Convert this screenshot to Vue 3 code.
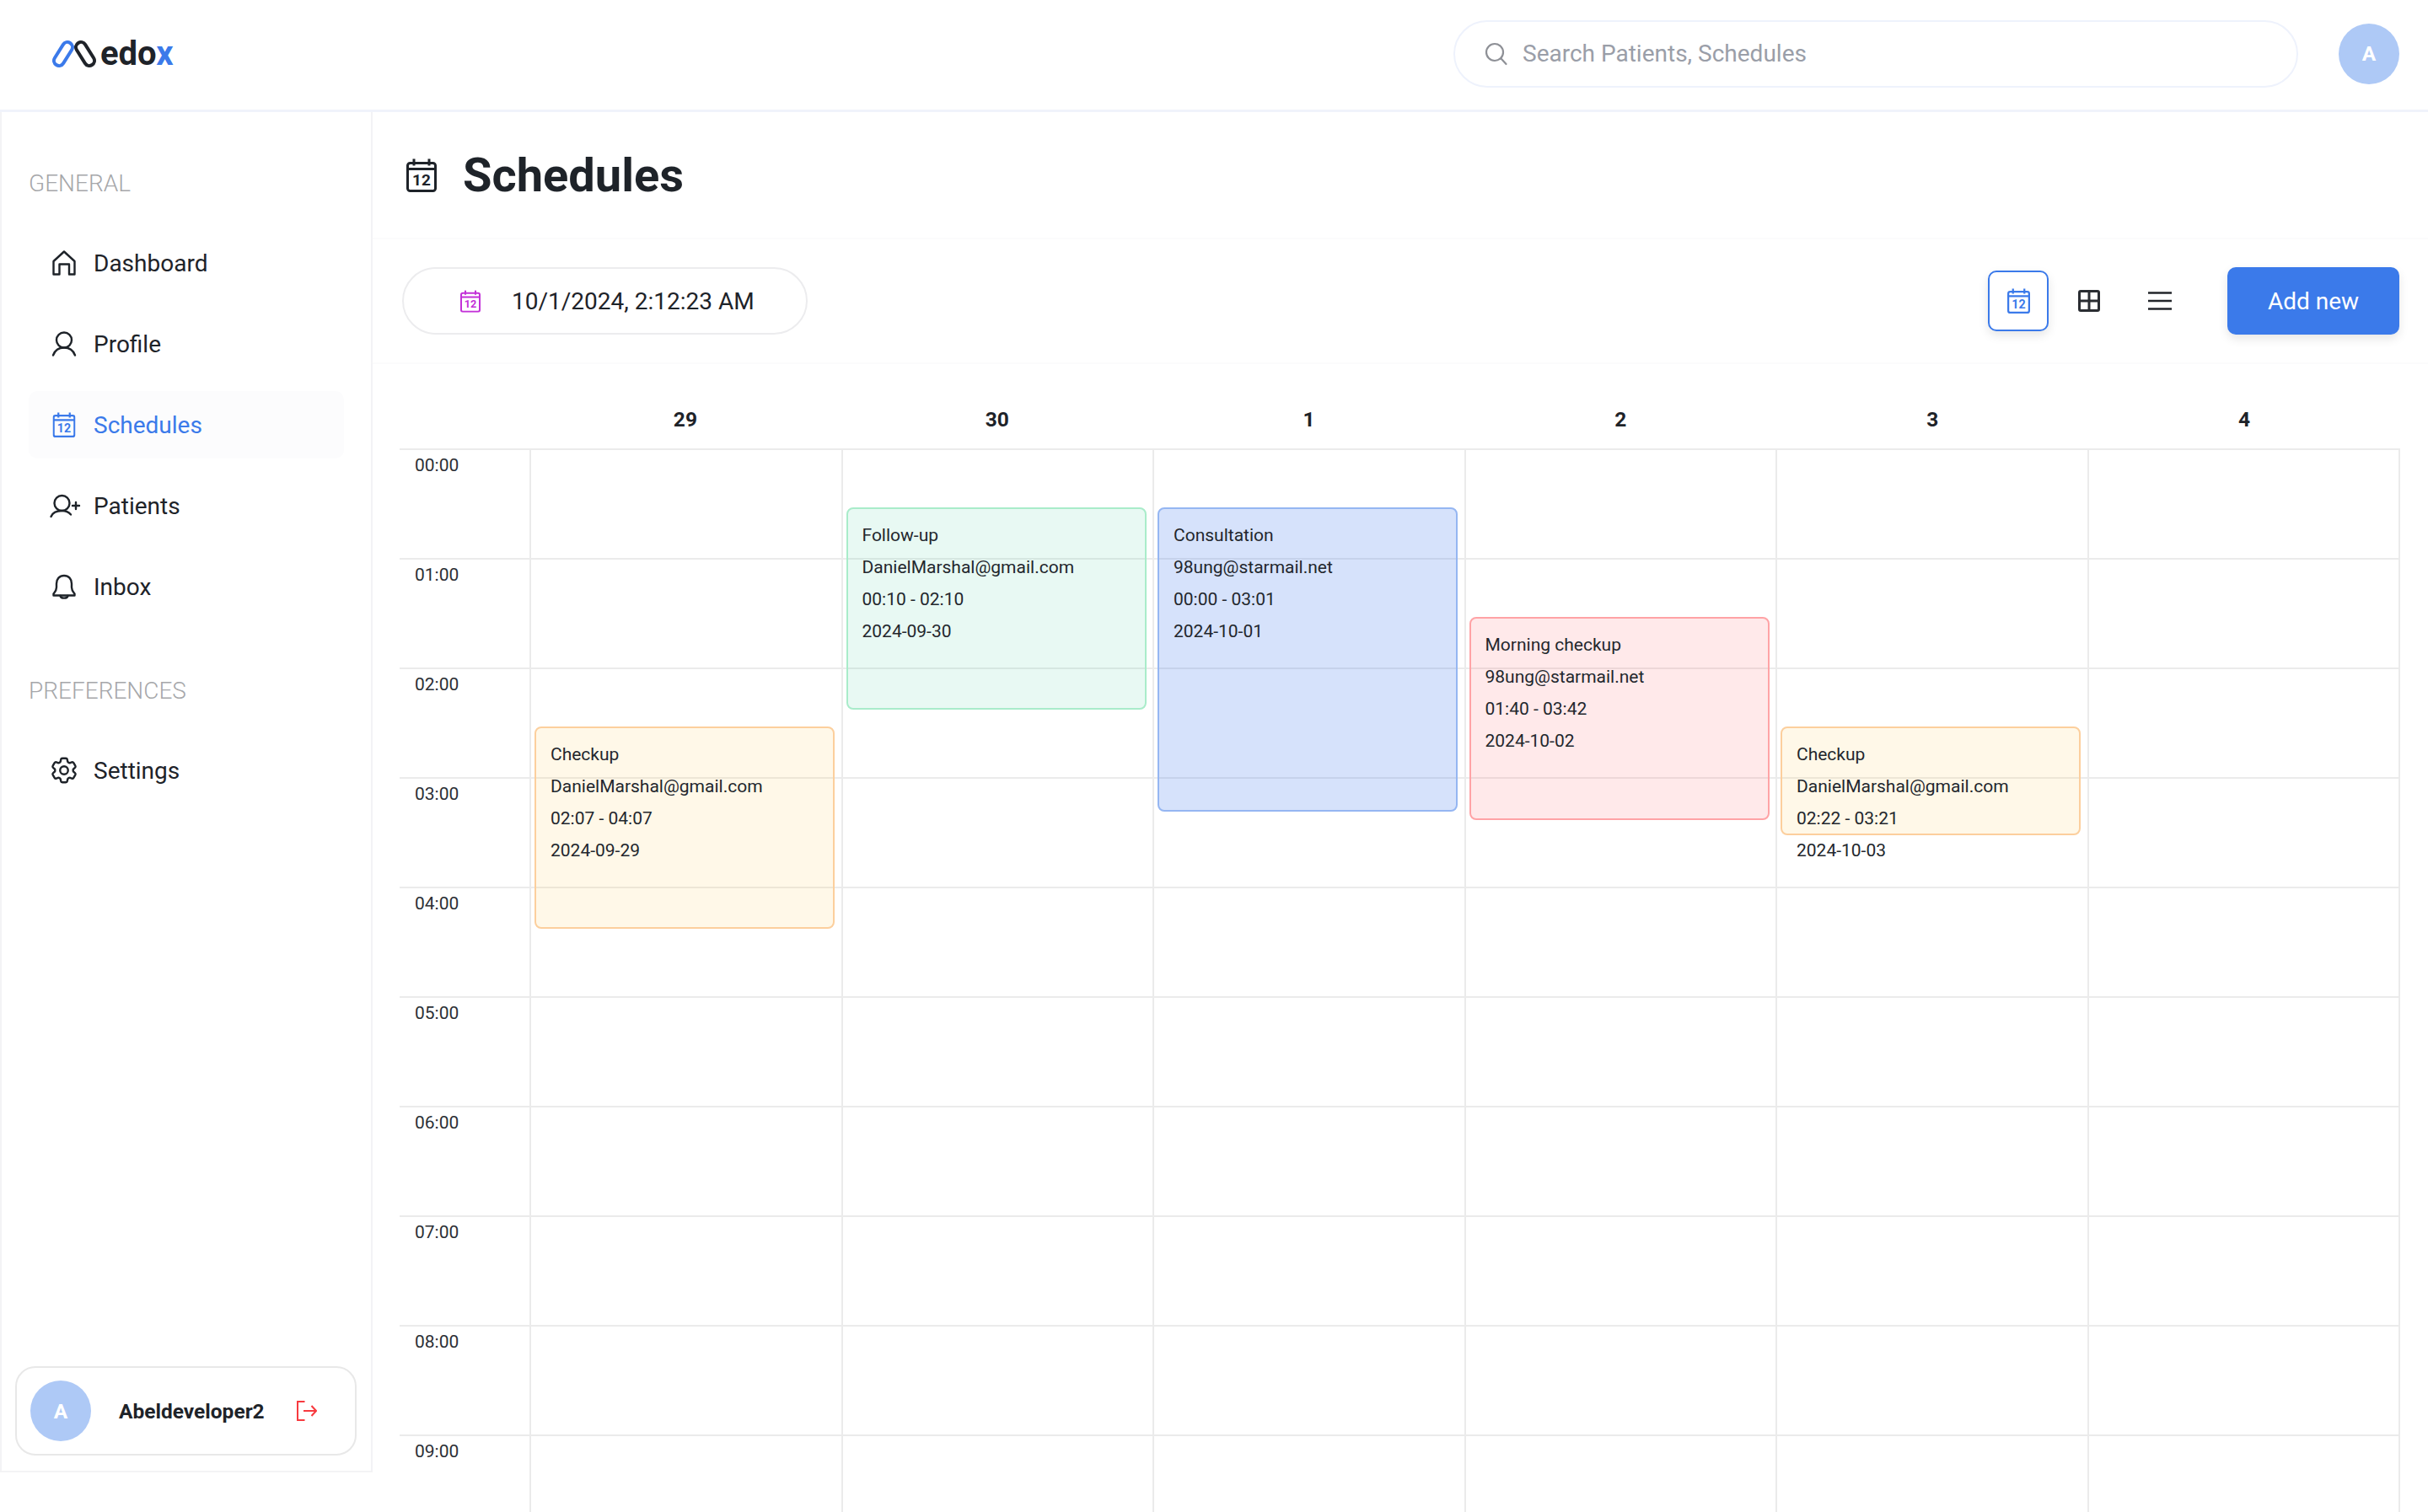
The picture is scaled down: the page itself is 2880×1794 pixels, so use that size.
<template>
  <div class="app">
    <svg class="defs" width="0" height="0">
      <symbol id="cal12" viewBox="0 0 36 40">
        <rect x="1.5" y="5.5" width="33" height="33" rx="3" fill="none" stroke="currentColor" stroke-width="3" />
        <path d="M1.5 12.5h33M9 0.5v8M27 0.5v8" fill="none" stroke="currentColor" stroke-width="3" />
        <text x="18" y="32" text-anchor="middle" class="cal-num" fill="currentColor">12</text>
      </symbol>
    </svg>

    <header class="topbar">
      <div class="logo">
        <svg class="logo-mark" width="52" height="34" viewBox="0 0 52 34">
          <rect x="7" y="1.6" width="12" height="30.8" rx="6" transform="rotate(32 13 17)" fill="none" stroke="#3b7aea" stroke-width="4" />
          <rect x="33" y="1.6" width="12" height="30.8" rx="6" transform="rotate(-32 39 17)" fill="none" stroke="#1f2329" stroke-width="4" />
        </svg>
        <span class="logo-text">edo<span class="logo-x">x</span></span>
      </div>
      <div class="search">
        <svg width="28" height="28" viewBox="0 0 28 28" fill="none" stroke="#8e9096" stroke-width="2.2" stroke-linecap="round">
          <circle cx="12" cy="12" r="10" />
          <path d="M19.5 19.5l6 6.5" />
        </svg>
        <input class="search-input" type="text" placeholder="Search Patients, Schedules" />
      </div>
      <div class="avatar top-avatar">A</div>
    </header>

    <div class="layout">
      <aside class="sidebar">
        <template v-for="group in navGroups" :key="group.label">
          <div class="nav-label">{{ group.label }}</div>
          <nav class="nav">
            <a v-for="item in group.items" :key="item.text" class="nav-item" :class="{ active: item.active }">
              <svg v-if="item.icon === 'calendar'" class="nav-icon" viewBox="0 0 36 40"><use href="#cal12" /></svg>
              <svg v-else class="nav-icon" viewBox="0 0 28 30" fill="none" stroke="currentColor" stroke-width="2.4" stroke-linecap="round" stroke-linejoin="round">
                <path v-if="item.icon === 'home'" d="M1.5 28.5V13L14 1.5 26.5 13v15.5H20V16.5H8.5v12z" />
                <template v-if="item.icon === 'user'">
                  <circle cx="14" cy="10.5" r="9" />
                  <path d="M1 28.5c2-5.500 7-9 13-9s11 3.500 13 9" />
                </template>
                <template v-if="item.icon === 'userPlus'">
                  <circle cx="11.500" cy="12" r="9" />
                  <path d="M-1.500 28c2-5 7-7 13-7 4 0 7.500 1 10.500 4.500M24 15h8M28 11v8" />
                </template>
                <template v-if="item.icon === 'bell'">
                  <path d="M14 2C8.500 2 5 6 5 11.500V16c0 3.500-2 5.500-3.500 7.500v2h25v-2C25 21.500 23 19.500 23 16v-4.500C23 6 19.500 2 14 2z" />
                  <path d="M9.500 26c.5 3.500 8.500 3.500 9 0" />
                </template>
                <template v-if="item.icon === 'gear'">
                  <g transform="translate(14 15) scale(1.58) translate(-12 -12)" stroke-width="1.520">
                    <path d="M9.594 3.94c.09-.542.56-.94 1.11-.94h2.593c.55 0 1.02.398 1.11.94l.213 1.281c.063.374.313.686.645.87.074.04.147.083.22.127.325.196.72.257 1.075.124l1.217-.456a1.125 1.125 0 011.37.49l1.296 2.247a1.125 1.125 0 01-.26 1.431l-1.003.827c-.293.24-.438.613-.431.992a6.759 6.759 0 010 .255c-.007.378.138.75.43.99l1.005.828c.424.35.534.954.26 1.43l-1.298 2.247a1.125 1.125 0 01-1.369.491l-1.217-.456c-.355-.133-.75-.072-1.076.124a6.57 6.57 0 01-.22.128c-.331.183-.581.495-.644.869l-.213 1.28c-.09.543-.56.941-1.11.941h-2.594c-.55 0-1.02-.398-1.11-.94l-.213-1.281c-.062-.374-.312-.686-.644-.87a6.52 6.52 0 01-.22-.127c-.325-.196-.72-.257-1.076-.124l-1.217.456a1.125 1.125 0 01-1.369-.49l-1.297-2.247a1.125 1.125 0 01.26-1.431l1.004-.827c.292-.24.437-.613.43-.992a6.563 6.563 0 010-.255c.007-.378-.138-.75-.43-.99l-1.004-.828a1.125 1.125 0 01-.26-1.43l1.297-2.247a1.125 1.125 0 011.37-.491l1.216.456c.356.133.751.072 1.076-.124.072-.044.146-.087.22-.128.332-.183.582-.495.644-.869l.214-1.281z" />
                    <circle cx="12" cy="12" r="3" />
                  </g>
                </template>
              </svg>
              <span>{{ item.text }}</span>
            </a>
          </nav>
        </template>

        <div class="user-card">
          <div class="avatar">A</div>
          <span class="user-name">Abeldeveloper2</span>
          <svg class="logout" width="24" height="24" viewBox="0 0 24 24" fill="none" stroke="#f73a3f" stroke-width="2">
            <path d="M9.500 1H1v22h8.500M8 12h15M17.500 6l5.500 6-5.500 6" />
          </svg>
        </div>
      </aside>

      <main class="main">
        <div class="title-row">
          <svg class="title-icon" viewBox="0 0 36 40"><use href="#cal12" /></svg>
          <h1 class="title">Schedules</h1>
        </div>

        <div class="toolbar">
          <div class="date-pill">
            <svg class="date-icon" viewBox="0 0 36 40"><use href="#cal12" /></svg>
            <span>10/1/2024, 2:12:23 AM</span>
          </div>
          <div class="view-switch">
            <button class="view-btn selected">
              <svg class="view-cal" viewBox="0 0 36 40"><use href="#cal12" /></svg>
            </button>
            <button class="view-btn">
              <svg width="26" height="26" viewBox="0 0 26 26" fill="none" stroke="#2a2d32" stroke-width="3">
                <rect x="1.500" y="1.500" width="23" height="23" rx="1.500" />
                <path d="M13 1.500v23M1.500 13h23" />
              </svg>
            </button>
            <button class="view-btn">
              <svg width="28" height="22" viewBox="0 0 28 22" fill="none" stroke="#22252a" stroke-width="2.500">
                <path d="M0 1.500h28M0 11h28M0 20.500h28" />
              </svg>
            </button>
          </div>
          <button class="add-btn">Add new</button>
        </div>

        <section class="calendar">
          <div class="day-head">
            <div v-for="day in days" :key="day.num" class="day-num">{{ day.num }}</div>
          </div>
          <div class="grid">
            <div class="time-col">
              <div v-for="h in hours" :key="h" class="slot time-slot">{{ h }}</div>
            </div>
            <div v-for="day in days" :key="day.num" class="day-col">
              <div v-for="h in hours" :key="h" class="slot"></div>
              <div
                v-for="ev in day.events"
                :key="ev.title"
                class="event"
                :class="ev.kind"
                :style="{ top: ev.top + 'px', height: ev.height + 'px' }">
                <div>{{ ev.title }}</div>
                <div>{{ ev.email }}</div>
                <div>{{ ev.time }}</div>
                <div>{{ ev.date }}</div>
              </div>
            </div>
          </div>
        </section>
      </main>
    </div>
  </div>
</template>

<script setup>
const navGroups = [
  {
    label: 'GENERAL',
    items: [
      { text: 'Dashboard', icon: 'home' },
      { text: 'Profile', icon: 'user' },
      { text: 'Schedules', icon: 'calendar', active: true },
      { text: 'Patients', icon: 'userPlus' },
      { text: 'Inbox', icon: 'bell' }
    ]
  },
  {
    label: 'PREFERENCES',
    items: [{ text: 'Settings', icon: 'gear' }]
  }
]

const hours = Array.from({ length: 10 }, (_, i) => `0${i}:00`)

const days = [
  {
    num: 29,
    events: [
      { title: 'Checkup', email: 'DanielMarshal@gmail.com', time: '02:07 - 04:07', date: '2024-09-29', kind: 'orange', top: 330, height: 240 }
    ]
  },
  {
    num: 30,
    events: [
      { title: 'Follow-up', email: 'DanielMarshal@gmail.com', time: '00:10 - 02:10', date: '2024-09-30', kind: 'green', top: 70, height: 240 }
    ]
  },
  {
    num: 1,
    events: [
      { title: 'Consultation', email: '98ung@starmail.net', time: '00:00 - 03:01', date: '2024-10-01', kind: 'blue', top: 70, height: 361 }
    ]
  },
  {
    num: 2,
    events: [
      { title: 'Morning checkup', email: '98ung@starmail.net', time: '01:40 - 03:42', date: '2024-10-02', kind: 'red', top: 200, height: 241 }
    ]
  },
  {
    num: 3,
    events: [
      { title: 'Checkup', email: 'DanielMarshal@gmail.com', time: '02:22 - 03:21', date: '2024-10-03', kind: 'orange', top: 330, height: 129 }
    ]
  },
  { num: 4, events: [] }
]
</script>

<style>
html,
body {
  margin: 0;
  overflow: hidden;
  background: #fff;
}
</style>

<style scoped>
.app {
  width: 2880px;
  height: 1794px;
  overflow: hidden;
  display: flex;
  flex-direction: column;
  background: #fff;
  color: #1e2329;
  font-family: Roboto, "Liberation Sans", sans-serif;
  font-size: 28px;
}

.defs {
  position: absolute;
}

.cal-num {
  font-family: Roboto, sans-serif;
  font-size: 19px;
  font-weight: 700;
}

.topbar {
  flex: none;
  box-sizing: border-box;
  height: 133px;
  padding: 0 34px 3px 62px;
  display: flex;
  align-items: center;
  border-bottom: 3px solid #f0f3fb;
}

.logo {
  display: flex;
  align-items: center;
  gap: 5px;
}

.logo-text {
  font-size: 40px;
  font-weight: 700;
  line-height: 34px;
}

.logo-x {
  color: #3b7aea;
}

.search {
  box-sizing: border-box;
  width: 1002px;
  height: 80px;
  margin-left: auto;
  padding-left: 35px;
  display: flex;
  align-items: center;
  gap: 17px;
  border: 2px solid #eef2fc;
  border-radius: 40px;
}

.search-input {
  flex: 1;
  border: 0;
  outline: 0;
  padding: 0;
  background: none;
  font: inherit;
  color: inherit;
}

.search-input::placeholder {
  color: #9a9ea8;
  opacity: 1;
}

.avatar {
  flex: none;
  width: 72px;
  height: 72px;
  display: flex;
  align-items: center;
  justify-content: center;
  border-radius: 50%;
  background: #aec9f6;
  color: #fff;
  font-size: 24.5px;
  font-weight: 700;
}

.top-avatar {
  margin-left: 48px;
}

.layout {
  flex: 1;
  display: flex;
  min-height: 0;
}

.sidebar {
  flex: none;
  box-sizing: border-box;
  width: 442px;
  height: 1614px;
  padding: 68px 32px 18px;
  display: flex;
  flex-direction: column;
  border: 2px solid #f3f3f5;
  border-top: 0;
}

.nav-label {
  height: 34px;
  line-height: 34px;
  margin-bottom: 37px;
  color: #a6a7aa;
  font-weight: 300;
}

.nav {
  display: flex;
  flex-direction: column;
  gap: 16px;
  margin-bottom: 67px;
}

.nav-item {
  box-sizing: border-box;
  height: 80px;
  padding-left: 28px;
  display: flex;
  align-items: center;
  gap: 21px;
  border-radius: 10px;
}

.nav-item.active {
  background: #fcfcfd;
  color: #3b7aea;
}

.nav-icon {
  flex: none;
  width: 28px;
  height: 30px;
  overflow: visible;
}

.user-card {
  box-sizing: border-box;
  width: 405px;
  height: 106px;
  margin: auto 0 0 -16px;
  padding-left: 16px;
  display: flex;
  align-items: center;
  border: 2px solid #e8e8e8;
  border-radius: 24px;
}

.user-name {
  margin-left: 33px;
  font-size: 24.5px;
  font-weight: 700;
}

.logout {
  margin-left: 38px;
}

.main {
  flex: 1;
  min-width: 0;
  display: flex;
  flex-direction: column;
}

.title-row {
  flex: none;
  box-sizing: border-box;
  height: 151px;
  padding-left: 40px;
  display: flex;
  align-items: center;
  gap: 31px;
  border-bottom: 2px solid #fbfbfc;
}

.title-icon {
  width: 36px;
  height: 40px;
}

.title {
  margin: 0;
  font-size: 56px;
  font-weight: 700;
  line-height: 66px;
}

.toolbar {
  flex: none;
  box-sizing: border-box;
  height: 148px;
  padding: 0 34px 0 35px;
  display: flex;
  align-items: center;
  border-bottom: 2px solid #fbfbfc;
}

.date-pill {
  box-sizing: border-box;
  width: 481px;
  height: 80px;
  padding-left: 67px;
  display: flex;
  align-items: center;
  gap: 37px;
  border: 2px solid #ececee;
  border-radius: 40px;
}

.date-icon {
  width: 24px;
  height: 27px;
  color: #c331d8;
}

.view-switch {
  margin-left: auto;
  display: flex;
  align-items: center;
}

.view-btn {
  box-sizing: border-box;
  width: 72px;
  height: 72px;
  margin-right: 12px;
  padding: 0;
  display: flex;
  align-items: center;
  justify-content: center;
  border: 0;
  background: none;
}

.view-btn.selected {
  border: 2px solid #3b7aea;
  border-radius: 10px;
  background: #fff;
  box-shadow: 0 5px 12px rgba(0, 0, 0, 0.1);
}

.view-cal {
  width: 27px;
  height: 30px;
  color: #3b7aea;
}

.add-btn {
  box-sizing: border-box;
  width: 204px;
  height: 80px;
  margin-left: 32px;
  border: 0;
  border-radius: 10px;
  background: #3b7aea;
  color: #fff;
  font: inherit;
  box-shadow: 0 5px 12px rgba(0, 0, 0, 0.1);
}

.calendar {
  flex: 1;
  min-height: 0;
  padding: 0 33px 0 32px;
}

.day-head {
  box-sizing: border-box;
  height: 100px;
  padding: 49px 0 0 154px;
  display: flex;
}

.day-num {
  flex: 1;
  text-align: center;
  line-height: 34px;
  font-size: 24.5px;
  font-weight: 700;
}

.grid {
  display: flex;
}

.time-col {
  flex: none;
  width: 154px;
}

.day-col {
  position: relative;
  flex: 1;
  border-left: 2px solid #ebebeb;
}

.day-col:last-child {
  border-right: 2px solid #ebebeb;
}

.slot {
  box-sizing: border-box;
  height: 130px;
  border-top: 2px solid #ebebeb;
}

.time-slot {
  padding: 5px 0 0 18px;
  line-height: 26px;
  font-size: 21px;
  color: #2c3036;
}

.event {
  position: absolute;
  left: 4px;
  box-sizing: border-box;
  width: 356px;
  padding: 12px 17px;
  border: 2px solid;
  border-radius: 8px;
  font-size: 21px;
  line-height: 38px;
  color: #23272d;
}

.orange {
  background: rgba(255, 185, 25, 0.1);
  border-color: #fccf9d;
}

.green {
  background: rgba(25, 195, 135, 0.1);
  border-color: #a9ecca;
}

.blue {
  background: rgba(50, 110, 235, 0.2);
  border-color: #95b6f2;
}

.red {
  background: rgba(255, 35, 45, 0.1);
  border-color: #ffa3a6;
}
</style>
